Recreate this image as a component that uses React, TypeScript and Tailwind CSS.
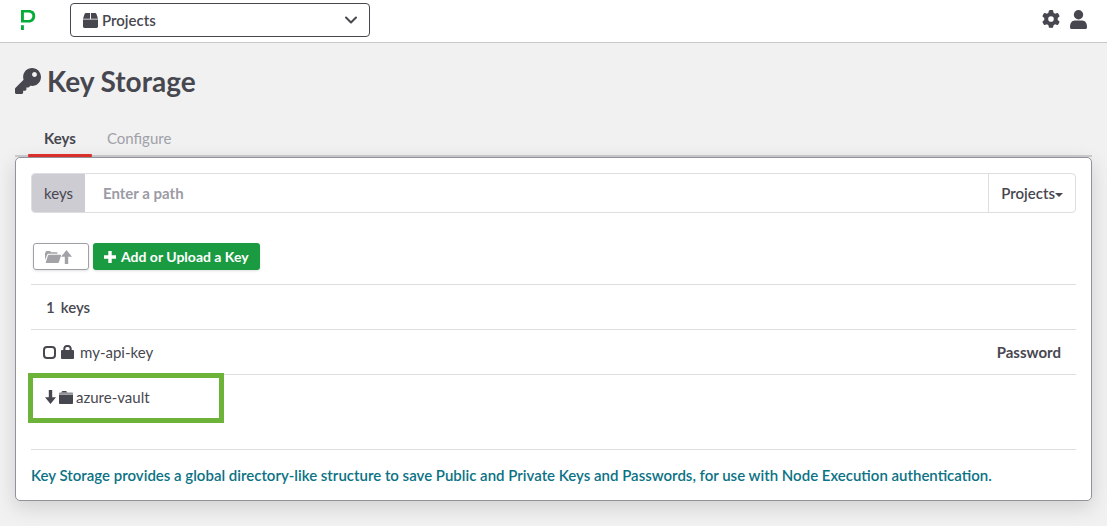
import React from "react";
import { FaBox, FaKey } from "react-icons/fa";
import { FaGear } from "react-icons/fa6";

type IconProps = { className?: string };

function Logo() {
  return (
    <svg className="h-5 w-[15px]" viewBox="0 0 15 20" fill="#06ac38" aria-hidden="true">
      <path d="M0 15.200h2.900V20H0z" />
      <path d="M0 0h7.600c1.900 0 3.200.4 4.300 1.100C13.300 2 14.200 3.800 14.200 6c0 3.900-2.500 6.500-6.400 6.500H0zm2.900 2.500v7.500h4.700c2.300 0 3.800-1.500 3.800-3.900 0-2.300-1.500-3.600-3.900-3.600z" />
    </svg>
  );
}

function UserIcon({ className }: IconProps) {
  return (
    <svg className={className} viewBox="0 0 17 19" fill="currentColor" aria-hidden="true">
      <circle cx="8.500" cy="4.700" r="4.700" />
      <path d="M0 17.200c0-3.900 1.600-6.700 4.900-6.700h7.200c3.300 0 4.900 2.800 4.900 6.700 0 1-.7 1.800-1.700 1.800H1.700C.7 19 0 18.200 0 17.200z" />
    </svg>
  );
}

function FolderOpenIcon({ className }: IconProps) {
  return (
    <svg className={className} viewBox="0 0 16 12" fill="currentColor" aria-hidden="true">
      <path d="M0 9V1.500h.8V.8Q.8 0 1.600 0h3.200q.7 0 .9.600l.2.600h5.900q.7 0 .7.700v.900H3.500q-.9 0-1.200.8z" />
      <path d="M3.900 3.800H15.500q.7 0 .5.700l-2 6.500q-.3 1-1.200 1H1.300q-.8 0-.5-.8l2.200-6.600q.2-.8.900-.8z" />
    </svg>
  );
}

function ArrowIcon({ className }: IconProps) {
  return (
    <svg className={className} viewBox="0 0 11 14" fill="currentColor" aria-hidden="true">
      <path d="M5.500 0L11 6.800H7.200V14H3.800V6.800H0z" />
    </svg>
  );
}

function PlusIcon({ className }: IconProps) {
  return (
    <svg className={className} viewBox="0 0 12 12" fill="currentColor" aria-hidden="true">
      <path d="M4.300 0h3.400v4.300H12v3.400H7.700V12H4.300V7.700H0V4.300h4.300z" />
    </svg>
  );
}

function LockIcon({ className }: IconProps) {
  return (
    <svg className={className} viewBox="0 0 13 14" fill="currentColor" aria-hidden="true">
      <path d="M2.300 6V3.600C2.300 1.500 3.900 0 5.800 0h1.400c1.900 0 3.500 1.500 3.500 3.600V6H8.600V3.900C8.600 2.700 7.900 2 7 2H6c-.9 0-1.600.7-1.600 1.900V6z" />
      <rect y="5" width="13" height="9" rx=".9" />
    </svg>
  );
}

function FolderIcon({ className }: IconProps) {
  return (
    <svg className={className} viewBox="0 0 14 13" fill="currentColor" aria-hidden="true">
      <path d="M2.300 1.500L2.800.6Q3.100 0 3.700 0h3q.7 0 1 .6l.5.900z" />
      <path d="M0 3V2.200q0-.7.700-.7h12.600q.7 0 .7.700V3z" opacity=".6" />
      <path d="M0 3.500h14v8.700q0 .8-.8.8H.8q-.8 0-.8-.8z" />
    </svg>
  );
}

function ChevronIcon({ className }: IconProps) {
  return (
    <svg className={className} viewBox="0 0 12 8" fill="none" stroke="currentColor" strokeWidth="2" strokeLinecap="round" strokeLinejoin="round" aria-hidden="true">
      <path d="M1 1.500l5 5 5-5" />
    </svg>
  );
}

function CaretIcon({ className }: IconProps) {
  return (
    <svg className={className} viewBox="0 0 8 4" fill="currentColor" aria-hidden="true">
      <path d="M0 0h8L4 4z" />
    </svg>
  );
}

export default function App() {
  return (
    <div className="flex min-h-screen flex-col bg-[#f1f1f1] font-['Lato','Open_Sans',sans-serif] text-[15px] leading-5 text-[#474750]">
      <header className="flex items-center border-b border-[#c8c8c8] bg-white pr-5 pl-[21px] pt-[3px] pb-[5px]">
        <a href="#home" aria-label="Home" className="mr-[34px]">
          <Logo />
        </a>
        <div className="flex h-[34px] w-[300px] items-center rounded-[4px] border border-[#474750] pl-3 focus-within:ring-1">
          <FaBox className="size-[15px]" aria-hidden="true" />
          <select aria-label="Project" className="h-8 min-w-0 flex-1 appearance-none bg-transparent pl-1 font-semibold outline-none">
            <option>Projects</option>
          </select>
          <ChevronIcon className="pointer-events-none mr-3 h-2 w-3" />
        </div>
        <nav className="ml-auto flex items-center gap-2.5 pb-0.5">
          <button type="button" aria-label="Settings">
            <FaGear className="size-[18px]" />
          </button>
          <button type="button" aria-label="User">
            <UserIcon className="h-[19px] w-[17px]" />
          </button>
        </nav>
      </header>

      <main className="px-[15px] pb-6">
        <h1 className="flex items-center gap-1.5 pt-[23px] text-[28px] leading-[30px] font-bold">
          <FaKey className="size-[26px]" aria-hidden="true" />
          Key Storage
        </h1>

        <div role="tablist" className="mt-[30px] flex border-b-2 border-[#cdcdcf] pl-[13px]">
          <button type="button" role="tab" aria-selected="true" className="relative px-4 pt-0.5 pb-[7px] font-bold after:absolute after:inset-x-0 after:-bottom-0.5 after:h-[3px] after:rounded-[1px] after:bg-[#d9302c]">
            Keys
          </button>
          <button type="button" role="tab" aria-selected="false" className="px-[15px] pt-0.5 pb-[7px] text-[#a0a0a8]">
            Configure
          </button>
        </div>

        <section className="rounded-[5px] border border-[#92929c] bg-white p-[15px] shadow-[0_6px_20px_rgba(0,0,0,0.14)]">
          <div className="flex h-10 overflow-hidden rounded-[4px] border border-[#dedee1]">
            <label htmlFor="path" className="flex items-center bg-[#cdccd2] px-3">
              keys
            </label>
            <input id="path" type="text" placeholder="Enter a path" className="min-w-0 flex-1 px-[18px] font-bold outline-none placeholder:text-[#9c9ca5]" />
            <button type="button" className="flex items-center border-l border-[#dedee1] px-3 font-semibold">
              Projects
              <CaretIcon className="mt-1 h-1 w-2" />
            </button>
          </div>

          <div className="mt-[30px] flex gap-1 pl-0.5 text-sm">
            <button type="button" aria-label="Up one folder" className="flex h-[27px] w-14 items-center rounded-[3px] border border-[#a0a0a4] pl-[11px] text-[#a3a3a7] shadow-sm">
              <FolderOpenIcon className="h-3 w-4" />
              <ArrowIcon className="h-3.5 w-[11px]" />
            </button>
            <button type="button" className="flex h-[27px] items-center gap-[5px] rounded-[3px] bg-[#1a9b42] px-[11px] font-bold text-white shadow-sm">
              <PlusIcon className="size-3" />
              Add or Upload a Key
            </button>
          </div>

          <table className="mt-3.5 w-full border-collapse">
            <thead>
              <tr className="h-[45px] border-t border-[#dddddf]">
                <th colSpan={2} className="pl-[15px] text-left font-semibold">
                  <span className="mr-1.5">1</span>
                  <span>keys</span>
                </th>
              </tr>
            </thead>
            <tbody>
              <tr className="h-[45px] border-t border-[#dddddf]">
                <td className="pl-3">
                  <label className="flex items-center">
                    <input type="checkbox" className="size-[13px] appearance-none rounded-[4px] border-2 border-[#474750] checked:bg-[#474750]" />
                    <LockIcon className="ml-[5px] h-3.5 w-[13px]" />
                    <span className="ml-1.5">my-api-key</span>
                  </label>
                </td>
                <td className="pr-[15px] text-right font-bold">Password</td>
              </tr>
              <tr className="h-[45px] border-t border-[#dddddf]">
                <td colSpan={2} className="relative pl-3.5">
                  <a href="#azure-vault" className="flex items-center">
                    <ArrowIcon className="h-3.5 w-[11px] rotate-180" />
                    <FolderIcon className="ml-[3px] h-[13px] w-3.5" />
                    <span className="ml-[3px]">azure-vault</span>
                  </a>
                  <span className="pointer-events-none absolute -top-0.5 -left-[3px] h-[50px] w-[196px] border-5 border-[#6db33a]" />
                </td>
              </tr>
            </tbody>
          </table>

          <p className="mt-[29px] border-t border-[#dddddf] pt-[15px] font-semibold text-[#0b7285]">
            Key Storage provides a global directory-like structure to save Public and Private Keys and Passwords, for use with Node Execution authentication.
          </p>
        </section>
      </main>
    </div>
  );
}
